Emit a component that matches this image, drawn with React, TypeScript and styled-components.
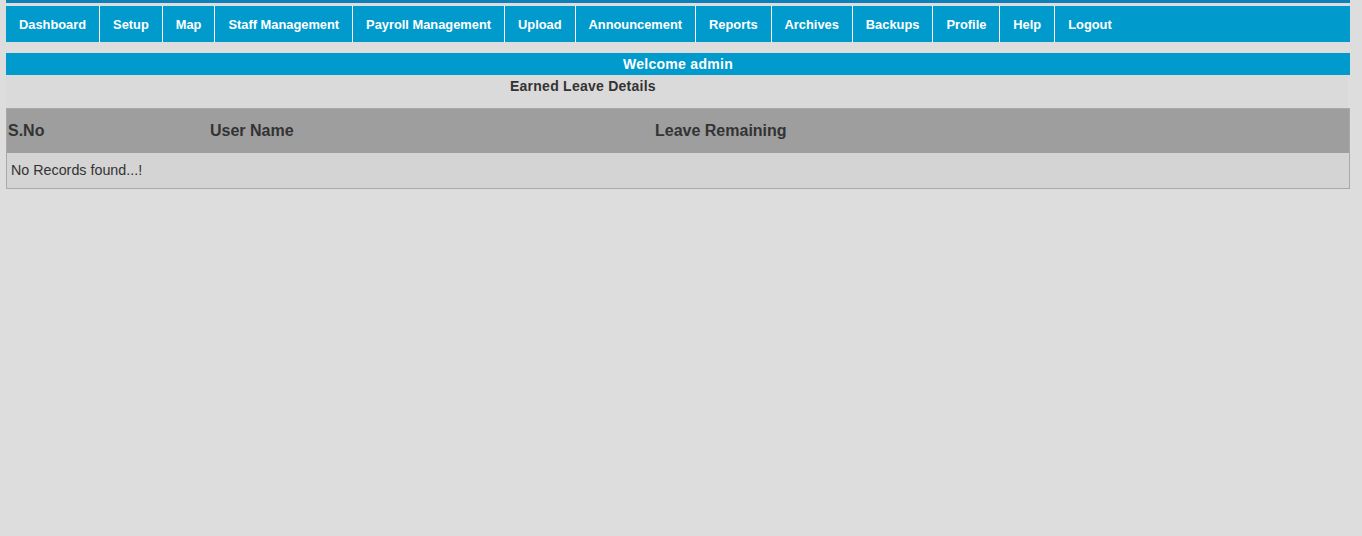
import styled, { createGlobalStyle } from 'styled-components';

const GlobalStyle = createGlobalStyle`
  html, body {
    margin: 0;
    padding: 0;
    background: #dddddd;
  }
  body {
    padding: 0 12px 0 6px;
    font-family: "Liberation Sans", Arial, sans-serif;
    color: #333333;
  }
`;

const TopStrip = styled.div`
  height: 3px;
  background: #0d82ba;
  margin-bottom: 3px;
`;

const Menu = styled.ul`
  display: flex;
  height: 36px;
  margin: 0;
  padding: 0;
  list-style: none;
  background: #009acd;
`;

const MenuItem = styled.li`
  display: flex;
  align-items: center;
  padding: 0 13px;
  border-right: 1px solid #ffffff;
  color: #ffffff;
  font-size: 12.85px;
  font-weight: 700;
  cursor: pointer;
  &:last-child {
    border-right: none;
  }
`;

const WelcomeBar = styled.div`
  margin-top: 11px;
  height: 22px;
  line-height: 22px;
  background: #009acd;
  color: #ffffff;
  text-align: center;
  font-size: 14px;
  font-weight: 700;
  letter-spacing: 0.3px;
`;

const TitleBand = styled.div`
  height: 33px;
  background: #dadada;
  margin-right: 2px;
  padding-left: 504px;
  font-size: 14px;
  font-weight: 700;
  line-height: 22px;
  letter-spacing: 0.25px;
`;

const Table = styled.div`
  border: 1px solid #a9a9a9;
`;

const Row = styled.div<{ $head?: boolean }>`
  display: grid;
  grid-template-columns: 202px 445px 1fr;
  align-items: center;
  height: ${(p) => (p.$head ? '44px' : '35px')};
  background: ${(p) => (p.$head ? '#9e9e9e' : '#d4d4d4')};
`;

const HeadCell = styled.div`
  padding-left: 1px;
  font-size: 16px;
  font-weight: 700;
  color: #333333;
`;

const EmptyCell = styled.div`
  grid-column: 1 / -1;
  padding-left: 4px;
  padding-bottom: 2px;
  font-size: 14.3px;
  color: #333333;
`;

const menu = [
  'Dashboard',
  'Setup',
  'Map',
  'Staff Management',
  'Payroll Management',
  'Upload',
  'Announcement',
  'Reports',
  'Archives',
  'Backups',
  'Profile',
  'Help',
  'Logout',
];

export default function App() {
  return (
    <>
      <GlobalStyle />
      <TopStrip />
      <Menu>
        {menu.map((m) => (
          <MenuItem key={m}>{m}</MenuItem>
        ))}
      </Menu>
      <WelcomeBar>Welcome admin</WelcomeBar>
      <TitleBand>Earned Leave Details</TitleBand>
      <Table>
        <Row $head>
          <HeadCell>S.No</HeadCell>
          <HeadCell>User Name</HeadCell>
          <HeadCell>Leave Remaining</HeadCell>
        </Row>
        <Row>
          <EmptyCell>No Records found...!</EmptyCell>
        </Row>
      </Table>
    </>
  );
}
